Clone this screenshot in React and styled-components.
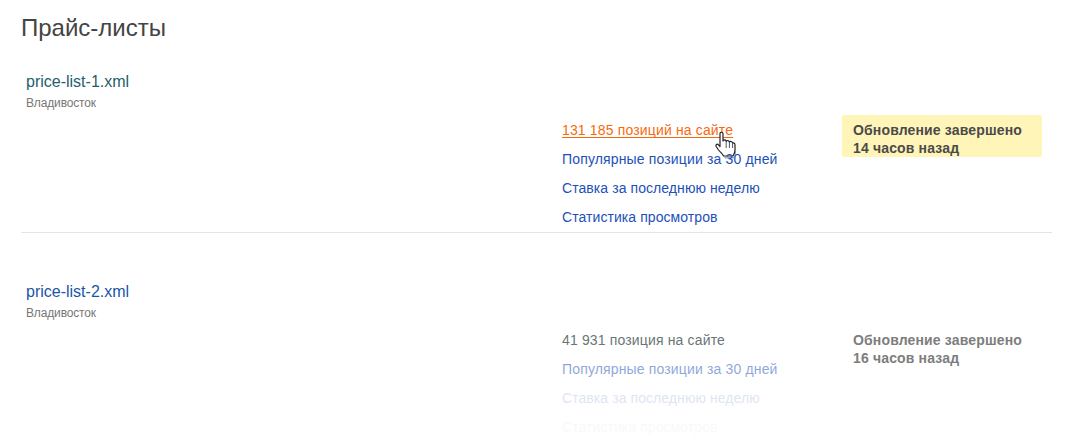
import React from "react";
import styled, { createGlobalStyle } from "styled-components";

const GlobalStyle = createGlobalStyle`
  html, body {
    margin: 0;
    background: #fff;
    font-family: "Liberation Sans", Arial, sans-serif;
  }
`;

const Page = styled.div`
  width: 1031px;
  padding: 14px 0 0 21px;
  height: 426px;
  overflow: hidden;
`;

const Title = styled.h1`
  margin: 0;
  font-size: 24px;
  line-height: 28px;
  font-weight: 400;
  color: #444;
`;

const Row = styled.section`
  padding: 30px 0 1px 5px;
  margin-bottom: 19px;
  border-bottom: ${(props) => (props.$last ? "none" : "1px solid #e4e4e4")};
`;

const FileName = styled.div`
  font-size: 16px;
  line-height: 20px;
  color: ${(props) => (props.$active ? "#24606c" : "#1a56a8")};
`;

const City = styled.div`
  margin-top: 4px;
  font-size: 12px;
  line-height: 14px;
  letter-spacing: -0.15px;
  color: #777;
`;

const Body = styled.div`
  display: grid;
  grid-template-columns: 280px 200px;
  margin: 5px 0 0 536px;
`;

const Links = styled.ul`
  margin: 0;
  padding: 0;
  list-style: none;
`;

const Item = styled.li`
  position: relative;
  font-size: 14px;
  line-height: 31px;
  height: 29px;
  letter-spacing: ${(props) => (props.$tight ? "0.07px" : "0.15px")};
  color: ${(props) => props.$color || "#1d51b8"};
  opacity: ${(props) => props.$fade ?? 1};
`;

const HoverLink = styled.span`
  color: #f66a10;
  text-decoration: underline;
  text-decoration-skip-ink: none;
  text-underline-offset: 2px;
`;

const Cursor = styled.svg`
  position: absolute;
  left: 153px;
  top: 16px;
  width: 22px;
  height: 28px;
`;

const Status = styled.div`
  align-self: start;
  height: 42px;
  box-sizing: border-box;
  padding: 6px 11px 0;
  border-radius: 2px;
  background: ${(props) => (props.$highlighted ? "#fff5b9" : "transparent")};
  color: ${(props) => (props.$highlighted ? "#4a4a4a" : "#7d7d7d")};
  font-size: 14px;
  line-height: 18px;
  font-weight: 700;
  letter-spacing: 0.15px;
  white-space: nowrap;
`;

const HandCursor = () => (
  <Cursor viewBox="0 0 22 28">
    <path d="M9 26 H19 L21 18 V23 L18.5 27.5 H10 Z" fill="#aaa" />
    <path
      d="M5 2.5 C5 .8 8 .8 8 2.5 V10 C8.5 8.5 11 8.5 11.2 10.5 C11.8 9 14.2 9.2 14.4 11.2 C15 10 17.5 10.2 17.6 12.2 C18.3 11.6 20 12 20 14 V19 C20 22 18.8 23.5 18 25 H8.5 C7.5 22.5 5.5 21.5 3.5 19 L1.2 15.5 C.3 13.8 2.2 12.5 3.5 13.8 L5 15.5 Z"
      fill="#fff"
      stroke="#222"
      strokeWidth="1.2"
      strokeLinejoin="round"
    />
    <path d="M11.2 10.5 V17 M14.4 11.2 V17 M17.6 12.2 V17" stroke="#555" strokeWidth="1" fill="none" />
  </Cursor>
);

const App = () => (
  <>
    <GlobalStyle />
    <Page>
      <Title>Прайс-листы</Title>

      <Row>
        <FileName $active>price-list-1.xml</FileName>
        <City>Владивосток</City>
        <Body>
          <Links>
            <Item>
              <HoverLink>131 185 позиций на сайте</HoverLink>
              <HandCursor />
            </Item>
            <Item>Популярные позиции за 30 дней</Item>
            <Item $tight>Ставка за последнюю неделю</Item>
            <Item $tight>Статистика просмотров</Item>
          </Links>
          <Status $highlighted>
            Обновление завершено
            <br />
            14 часов назад
          </Status>
        </Body>
      </Row>

      <Row $last>
        <FileName>price-list-2.xml</FileName>
        <City>Владивосток</City>
        <Body>
          <Links>
            <Item $color="#6a7676">41 931 позиция на сайте</Item>
            <Item $fade={0.5}>Популярные позиции за 30 дней</Item>
            <Item $tight $fade={0.15}>Ставка за последнюю неделю</Item>
            <Item $tight $fade={0.03}>Статистика просмотров</Item>
          </Links>
          <Status>
            Обновление завершено
            <br />
            16 часов назад
          </Status>
        </Body>
      </Row>
    </Page>
  </>
);

export default App;
